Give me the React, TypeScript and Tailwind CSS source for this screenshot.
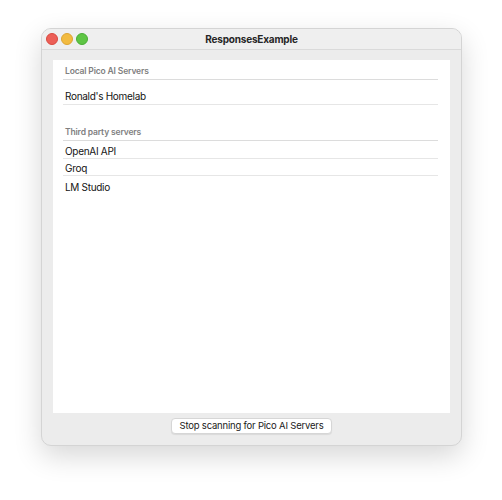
import { FC } from "react";

const font = { fontFamily: "Inter, 'Liberation Sans', sans-serif" };

const SectionHeader: FC<{ title: string; className: string }> = ({ title, className }) => (
  <div className={`flex items-end ml-[10px] mr-[12px] px-[2px] border-b border-[#dcdcdc] ${className}`}>
    <span className="text-[8.5px] leading-[11px] font-semibold tracking-[-0.15px] text-[#808080]">{title}</span>
  </div>
);

const Row: FC<{ name: string; className: string; last?: boolean }> = ({ name, className, last }) => (
  <div
    className={`flex items-end ml-[10px] mr-[12px] px-[2px] ${last ? "" : "border-b border-[#e6e6e6]"} ${className}`}
  >
    <span className="text-[10px] leading-[12px] tracking-[-0.3px] text-[#141414]">{name}</span>
  </div>
);

const App: FC = () => {
  const thirdParty = ["OpenAI API", "Groq", "LM Studio"];
  return (
    <div className="w-[502px] h-[500px] bg-white pt-[28px] pl-[41px]" style={font}>
      <div className="w-[421px] h-[418px] flex flex-col rounded-[10px] bg-[#ececec] border border-[#d4d4d4] shadow-[0_10px_28px_rgba(0,0,0,0.16)] overflow-hidden">
        {/* title bar */}
        <div className="relative h-[21px] shrink-0 flex items-center justify-center bg-[#efefef] border-b border-[#dadada]">
          <div className="absolute left-[4px] top-[4px] flex gap-[3px]">
            <span className="w-[12px] h-[12px] rounded-full bg-[#ec5f57] border border-[#d9493f]" />
            <span className="w-[12px] h-[12px] rounded-full bg-[#f2bb40] border border-[#dca433]" />
            <span className="w-[12px] h-[12px] rounded-full bg-[#5ec544] border border-[#4aad35]" />
          </div>
          <span className="text-[10px] font-bold tracking-[-0.2px] text-[#262626] leading-none">ResponsesExample</span>
        </div>
        {/* body */}
        <div className="flex-1 flex flex-col px-[11px] pt-[10px] pb-[11px]">
          <div className="flex-1 bg-white flex flex-col">
            <SectionHeader title="Local Pico AI Servers" className="h-[20px] pb-[2px]" />
            <Row name="Ronald's Homelab" className="h-[25px] pb-[2px]" />
            <SectionHeader title="Third party servers" className="h-[36px] pb-[2px]" />
            {thirdParty.map((name, i) => (
              <Row key={name} name={name} className="h-[17.5px] pb-[1px]" last={i === thirdParty.length - 1} />
            ))}
          </div>
          <div className="flex justify-center pt-[5px]">
            <button className="h-[16px] w-[161px] rounded-[4px] bg-white border border-[#d6d6d6] shadow-[0_1px_1px_rgba(0,0,0,0.08)] text-[9.5px] tracking-[-0.2px] whitespace-nowrap leading-none text-[#1a1a1a]">
              Stop scanning for Pico AI Servers
            </button>
          </div>
        </div>
      </div>
    </div>
  );
};

export default App;
